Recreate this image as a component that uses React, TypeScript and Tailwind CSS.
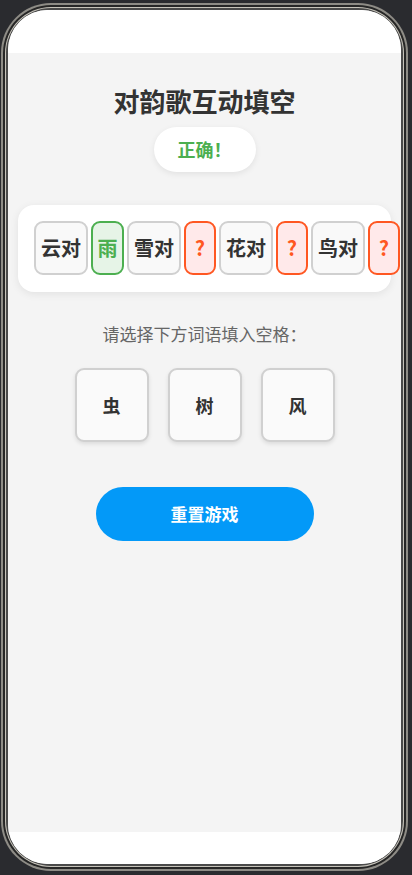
const words = [
  { text: '云对', kind: 'word' },
  { text: '雨', kind: 'right' },
  { text: '雪对', kind: 'word' },
  { text: '?', kind: 'blank' },
  { text: '花对', kind: 'word' },
  { text: '?', kind: 'blank' },
  { text: '鸟对', kind: 'word' },
  { text: '?', kind: 'blank' },
];

const options = ['虫', '树', '风'];

function Tile({ text, kind }: { text: string; kind: string }) {
  if (kind === 'right') {
    return (
      <div className="shrink-0 w-[33px] flex justify-center py-[10px] border-2 border-[#4caf50] bg-[#e6f4e7] text-[#4caf50] rounded-[9px] text-[20px] leading-[30px] font-bold">
        {text}
      </div>
    );
  }
  if (kind === 'blank') {
    return (
      <div className="shrink-0 w-[32px] flex justify-center py-[10px] border-2 border-[#ff5722] bg-[#ffe9ea] text-[#ff5722] rounded-[9px] text-[20px] leading-[30px] font-bold">
        {text}
      </div>
    );
  }
  return (
    <div className="shrink-0 w-[54px] flex justify-center py-[10px] border-2 border-[#d0d0d0] bg-[#f9f9f9] text-[#333] rounded-[9px] text-[20px] leading-[30px] font-bold">
      {text}
    </div>
  );
}

export default function App() {
  return (
    <div
      className="w-[412px] h-[875px] bg-[#2a2b2f] pt-[3px] pl-[1px] overflow-hidden"
      style={{ fontFamily: '"Noto Sans CJK SC", "Noto Sans", sans-serif' }}
    >
      {/* phone frame */}
      <div className="w-[407px] h-[868px] rounded-[50px] bg-[#8e8c86] p-[2px]">
        <div className="h-full rounded-[48px] bg-[#262626] p-[2px]">
          <div className="h-full rounded-[46px] bg-[#c6c3ba] p-[1px]">
            <div className="h-full rounded-[45px] bg-[#4a4a4a] p-[2px]">
              <div className="h-full rounded-[40px] overflow-hidden bg-white flex flex-col">
                <div className="h-[43px] bg-white shrink-0" />

                {/* content */}
                <div className="flex-1 bg-[#f4f4f4] flex flex-col items-center pt-[32px]">
                  <h1 className="text-[26px] leading-[31px] font-bold text-[#333]">对韵歌互动填空</h1>

                  <div className="mt-[11px] w-[102px] h-[45px] rounded-full bg-white shadow-[0_2px_6px_rgba(0,0,0,0.08)] flex items-center justify-center">
                    <span className="text-[18px] font-bold text-[#4caf50]">正确！</span>
                  </div>

                  <div className="mt-[33px] self-stretch mx-[10px] bg-white rounded-[16px] shadow-[0_2px_8px_rgba(0,0,0,0.08)] pt-[16px] pb-[17px] pl-[16px] flex gap-[3px]">
                    {words.map((w, i) => (
                      <Tile key={i} text={w.text} kind={w.kind} />
                    ))}
                  </div>

                  <p className="mt-[30px] text-[17px] leading-[24px] text-[#666]">请选择下方词语填入空格：</p>

                  <div className="mt-[22px] flex gap-[19px]">
                    {options.map((o) => (
                      <div
                        key={o}
                        className="w-[74px] h-[74px] rounded-[9px] border-2 border-[#d0d0d0] bg-[#fafafa] shadow-[0_2px_4px_rgba(0,0,0,0.1)] flex items-center justify-center text-[18px] font-bold text-[#333]"
                      >
                        {o}
                      </div>
                    ))}
                  </div>

                  <button className="mt-[45px] w-[218px] h-[54px] rounded-full bg-[#0399f8] text-white text-[17px] font-bold">
                    重置游戏
                  </button>
                </div>

                <div className="h-[32px] bg-white shrink-0" />
              </div>
            </div>
          </div>
        </div>
      </div>
    </div>
  );
}
